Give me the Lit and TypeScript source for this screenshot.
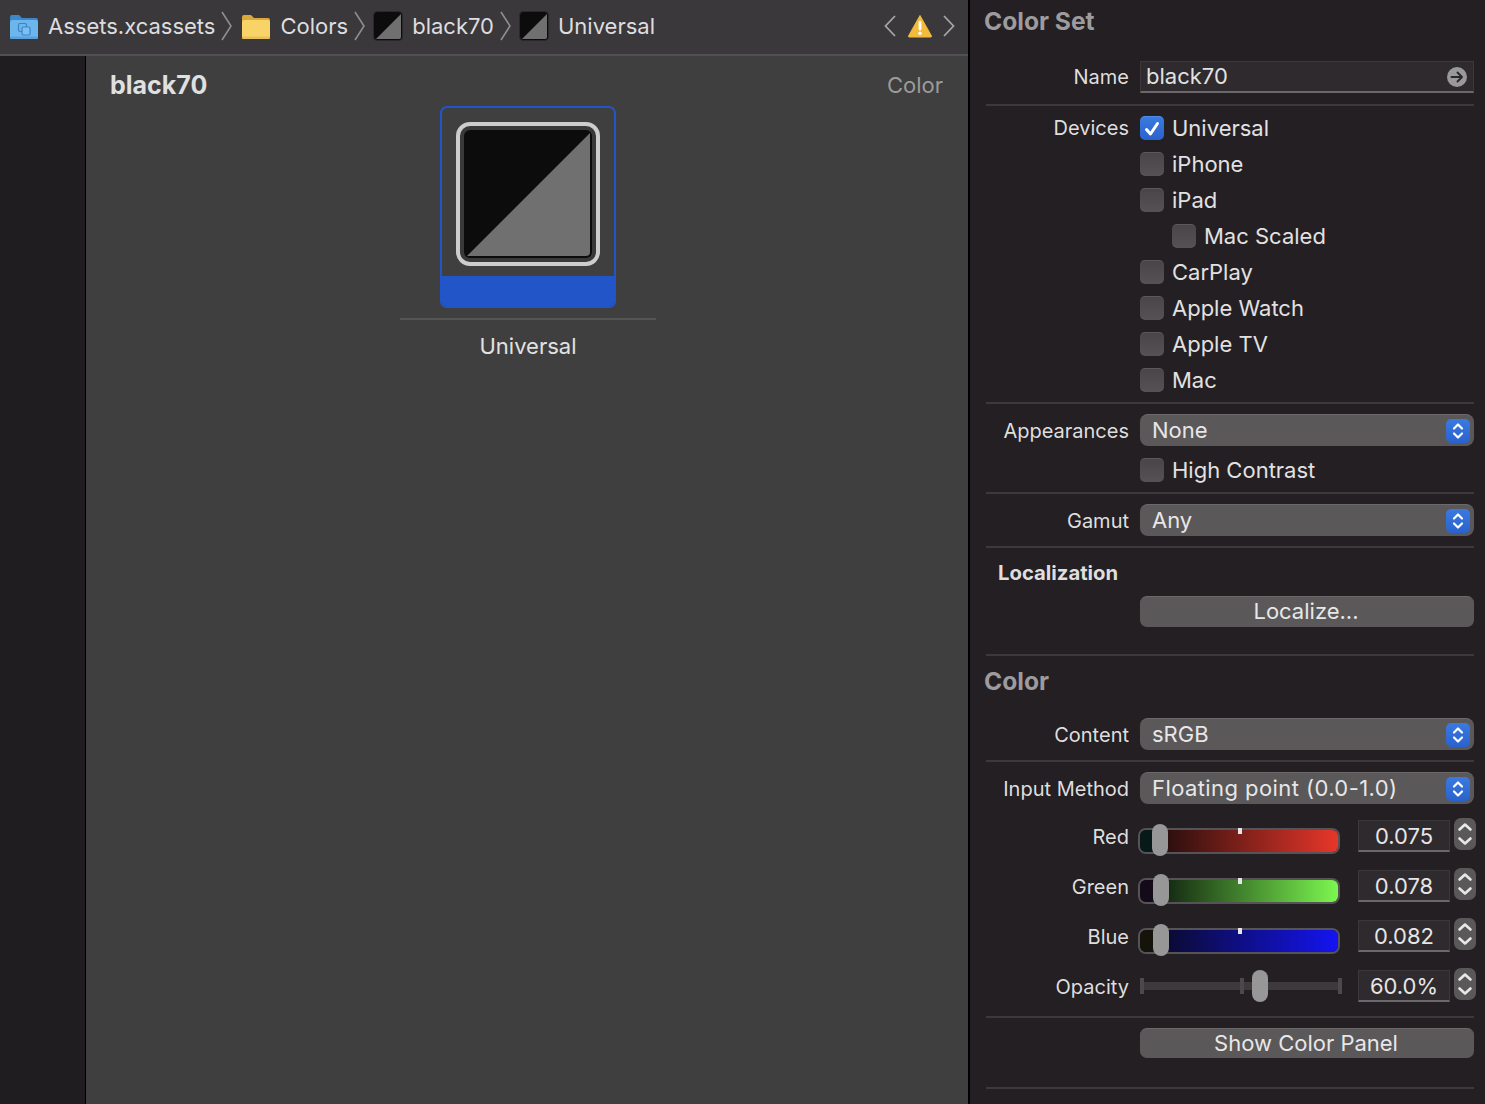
import { LitElement, html, css, svg } from "lit";
import { customElement } from "lit/decorators.js";

const stepperGlyph = html`<svg width="24" height="24" viewBox="0 0 24 24" fill="none" stroke="#fff" stroke-width="2.2" stroke-linecap="round" stroke-linejoin="round"><path d="M8 9.5 12 5.5 16 9.5"/><path d="M8 14.5 12 18.5 16 14.5"/></svg>`;

const swatch = html`<svg class="swatch" width="30" height="30" viewBox="0 0 30 30"><rect x="0.5" y="0.5" width="29" height="29" rx="4" fill="#0c0c0c" stroke="#2a2a2a"/><path d="M28 3 V26 a2 2 0 0 1 -2 2 H3 Z" fill="#707070"/></svg>`;

const crumbChevron = html`<svg class="crumb-chev" width="11" height="30" viewBox="0 0 11 30" fill="none" stroke="#8e8d8f" stroke-width="1.6"><path d="M1 1 10 15 1 29"/></svg>`;

function folder(back: string, front: string, band: string, glyph: boolean) {
  return html`<svg class="folder" width="28" height="28" viewBox="0 0 28 28">
    <path d="M0 5 a2 2 0 0 1 2-2 h7 l3 3 h14 a2 2 0 0 1 2 2 v4 H0Z" fill="${back}"/>
    <rect x="0" y="8" width="28" height="19" rx="2.2" fill="${front}"/>
    <rect x="0" y="24.5" width="28" height="2.5" rx="1.2" fill="${band}"/>
    ${glyph
      ? svg`<g fill="none" stroke="#3f82c4" stroke-width="1.2"><rect x="8.5" y="11.5" width="8" height="8" rx="1.5"/><rect x="12" y="15" width="8" height="8" rx="1.5" fill="#7cc0f2"/></g>`
      : null}
  </svg>`;
}

@customElement("app-root")
export class AppRoot extends LitElement {
  static styles = css`
    :host { display: block; width: 1485px; height: 1104px; overflow: hidden; font-family: Inter, "Liberation Sans", sans-serif; color: #e2e1e2; background: #000; }
    * { box-sizing: border-box; }
    .app { display: flex; height: 1104px; }

    .main { width: 968px; display: flex; flex-direction: column; flex: none; }
    .bar { height: 56px; flex: none; background: #3a383b; border-bottom: 2px solid #525152; display: flex; align-items: center; padding: 0 13px 2px 10px; font-size: 22px; color: #dedddf; }
    .bar .folder { margin-right: 10px; }
    .crumb-chev { margin: 0 10px 0 6px; flex: none; }
    .bar .swatch { margin: 0 9px 0 -2px; flex: none; }
    .spacer { flex: 1; }
    .nav { flex: none; }
    .warn { margin: 0 11px 0 12px; flex: none; }

    .body { flex: 1; display: flex; min-height: 0; }
    .sidebar { width: 86px; flex: none; background: #201d20; border-right: 1px solid #000; }
    .canvas { flex: 1; background: #3f3f3f; display: flex; flex-direction: column; }
    .canvas-head { height: 50px; flex: none; display: flex; align-items: center; justify-content: space-between; padding: 8px 25px 0 24px; }
    .canvas-title { font-size: 25px; font-weight: 700; color: #e0e0e0; }
    .canvas-kind { font-size: 22px; color: #9b9b9b; }
    .slot { align-self: center; width: 256px; display: flex; flex-direction: column; align-items: center; margin-left: 2px; }
    .tile { width: 176px; height: 202px; border: 2px solid #2255c8; border-radius: 7px; display: flex; flex-direction: column; align-items: center; overflow: hidden; }
    .well { width: 144px; height: 144px; margin-top: 14px; border: 4px solid #cdcdcd; border-radius: 14px; background: #393939; padding: 4px; flex: none; }
    .well svg { display: block; }
    .band { margin-top: auto; height: 30px; width: 100%; background: #2255c8; }
    .slot-rule { width: 256px; height: 2px; background: #555; margin-top: 10px; }
    .slot-name { font-size: 22px; color: #e2e2e2; margin-top: 12px; line-height: 28px; }

    .inspector { width: 515px; margin-left: 2px; flex: none; background: #231f23; padding: 0 11px 0 0; display: flex; flex-direction: column; }
    .section-title { font-size: 24.6px; font-weight: 700; color: #9d9b9d; padding-left: 14px; line-height: 30px; }
    .rule { height: 2px; background: #3c393c; margin-left: 16px; flex: none; }
    .row { display: grid; grid-template-columns: 159px 334px; column-gap: 11px; align-items: center; }
    .label { font-size: 20px; text-align: right; color: #dfdedf; line-height: 24px; padding-top: 2px; }
    .control { min-width: 0; }
    .top { align-items: start; }
    .top .label { padding-top: 0; margin-top: 6px; }
    .name-row .label { padding-top: 0; }

    .field { height: 32px; background: #2e2a2e; border-top: 1px solid #3b383b; border-left: 1px solid #3b383b; border-right: 1px solid #3b383b; border-bottom: 2px solid #6a686a; font-size: 22px; padding-left: 5px; display: flex; align-items: center; justify-content: space-between; padding-right: 6px; color: #e2e1e2; }
    .field span { margin-top: -2px; }
    .go { width: 20px; height: 20px; flex: none; }

    .check-row { height: 36px; display: flex; align-items: center; gap: 8px; font-size: 22px; }
    .check-row.indent { padding-left: 32px; }
    .box { width: 24px; height: 24px; flex: none; border-radius: 5px; background: linear-gradient(#484648, #545254); border-top: 1px solid #5b595b; }
    .box.on { background: linear-gradient(#3a7ae0, #2a62cc); border-top: 1px solid #4f8ce8; display: flex; align-items: center; justify-content: center; }

    .popup { height: 32px; border-radius: 8px; background: #5a5859; border-top: 1px solid #6b696a; font-size: 22px; display: flex; align-items: center; justify-content: space-between; padding: 0 4px 0 12px; color: #e8e7e8; }
    .popup span { margin-top: -2px; }
    .popup span.wide { letter-spacing: 0.42px; }
    .popup-btn { width: 24px; height: 24px; border-radius: 5px; background: linear-gradient(#3a7ae0, #2a62cc); flex: none; }
    .popup-btn svg { display: block; }

    .push { height: 31px; border-radius: 7px; background: #5a5859; border-top: 1px solid #6b696a; font-size: 22px; display: flex; align-items: center; justify-content: center; color: #e8e7e8; padding: 0 2px 3px 0; }
    .push.short { height: 30px; padding-bottom: 1px; }

    .heading { font-size: 20.3px; font-weight: 700; padding-left: 28px; color: #dfdedf; line-height: 34px; height: 34px; }

    .slider-row { height: 50px; display: grid; grid-template-columns: 159px 229px 92px 26px; align-items: center; }
    .track-wrap { position: relative; width: 202px; height: 50px; margin-left: 9px; }
    .track { position: absolute; left: 0; top: 17px; width: 202px; height: 26px; border-radius: 8px; border: 2px solid #555356; overflow: hidden; display: flex; }
    .track-start { flex: none; }
    .track-fill { flex: 1; }
    .tick { position: absolute; left: 100px; top: 17px; width: 4px; height: 6px; background: #e6e6e6; }
    .thumb { position: absolute; top: 13px; width: 16px; height: 32px; border-radius: 8px; background: #989798; }
    .op-line { position: absolute; left: 4px; top: 21px; width: 198px; height: 8px; background: #3c3a3c; }
    .op-tick { position: absolute; top: 17px; width: 4px; height: 16px; background: #4b494b; }
    .op-thumb { top: 9px; }
    .value { width: 92px; height: 32px; background: #2e2a2e; border-top: 1px solid #3b383b; border-left: 1px solid #3b383b; border-right: 1px solid #3b383b; border-bottom: 2px solid #6a686a; font-size: 22px; display: flex; align-items: center; justify-content: center; color: #e6e5e6; }
    .stepper { width: 22px; height: 32px; margin: 0 0 4px 4px; border-radius: 7px; background: #5a5859; }
    .stepper svg { display: block; }
  `;

  private popup(text: string, wide = false) {
    return html`<div class="popup"><span class="${wide ? "wide" : ""}">${text}</span><div class="popup-btn">${stepperGlyph}</div></div>`;
  }

  private check(text: string, on = false, indent = false) {
    return html`<div class="check-row ${indent ? "indent" : ""}">
      <div class="box ${on ? "on" : ""}">${on
        ? html`<svg width="18" height="18" viewBox="0 0 18 18" fill="none" stroke="#fff" stroke-width="3" stroke-linecap="round" stroke-linejoin="round"><path d="M3.5 9.5 7.5 14 14.5 3.5"/></svg>`
        : null}</div><span>${text}</span></div>`;
  }

  private stepper() {
    return html`<div class="stepper"><svg width="22" height="32" viewBox="0 0 22 32" fill="none" stroke="#e8e8e8" stroke-width="2.6" stroke-linecap="round" stroke-linejoin="round"><path d="M5.5 11.5 11 6.5 16.5 11.5"/><path d="M5.5 20.5 11 25.5 16.5 20.5"/></svg></div>`;
  }

  private colorSlider(label: string, value: string, thumb: number, start: string, from: string, to: string) {
    return html`<div class="slider-row">
      <div class="label">${label}</div>
      <div class="track-wrap">
        <div class="track">
          <div class="track-start" style="width:${thumb}px;background:${start}"></div>
          <div class="track-fill" style="background:linear-gradient(90deg,${from},${to})"></div>
        </div>
        <div class="tick"></div>
        <div class="thumb" style="left:${thumb}px"></div>
      </div>
      <div class="value">${value}</div>
      ${this.stepper()}
    </div>`;
  }

  render() {
    return html`<div class="app">
      <div class="main">
        <div class="bar">
          ${folder("#3f86c8", "#6cb6ee", "#5aa2dc", true)}<span>Assets.xcassets</span>${crumbChevron}
          ${folder("#d9a93a", "#f8d468", "#e8c054", false)}<span>Colors</span>${crumbChevron}
          ${swatch}<span>black70</span>${crumbChevron}
          ${swatch}<span>Universal</span>
          <div class="spacer"></div>
          <svg class="nav" width="12" height="24" viewBox="0 0 12 24" fill="none" stroke="#a5a4a6" stroke-width="1.8"><path d="M11 2 1.5 12 11 22"/></svg>
          <svg class="warn" width="24" height="24" viewBox="0 0 24 24"><path d="M12 1.5 L23.5 22 a0.8 0.8 0 0 1 -0.6 1 H1.1 a0.8 0.8 0 0 1 -0.6 -1 Z" fill="#f2bb3c" stroke="#f2bb3c" stroke-linejoin="round"/><rect x="10.6" y="7" width="2.8" height="9.5" rx="1.4" fill="#fff"/><circle cx="12" cy="19.3" r="1.7" fill="#fff"/></svg>
          <svg class="nav" width="12" height="24" viewBox="0 0 12 24" fill="none" stroke="#a5a4a6" stroke-width="1.8"><path d="M1 2 10.5 12 1 22"/></svg>
        </div>
        <div class="body">
          <div class="sidebar"></div>
          <div class="canvas">
            <div class="canvas-head"><span class="canvas-title">black70</span><span class="canvas-kind">Color</span></div>
            <div class="slot">
              <div class="tile">
                <div class="well">
                  <svg width="128" height="128" viewBox="0 0 128 128"><rect width="128" height="128" rx="6" fill="#0c0c0c"/><path d="M126 3 V122 a4 4 0 0 1 -4 4 H3 Z" fill="#707070"/></svg>
                </div>
                <div class="band"></div>
              </div>
              <div class="slot-rule"></div>
              <div class="slot-name">Universal</div>
            </div>
          </div>
        </div>
      </div>

      <div class="inspector">
        <div class="section-title" style="margin-top:6px">Color Set</div>
        <div class="row name-row" style="margin-top:25px">
          <div class="label">Name</div>
          <div class="control"><div class="field"><span>black70</span>
            <svg class="go" viewBox="0 0 20 20"><circle cx="10" cy="10" r="10" fill="#9a999a"/><path d="M4.5 10 H15 M10.5 5.5 15 10 10.5 14.5" fill="none" stroke="#2b282b" stroke-width="2" stroke-linecap="round" stroke-linejoin="round"/></svg>
          </div></div>
        </div>
        <div class="rule" style="margin-top:11px"></div>
        <div class="row top" style="margin-top:4px">
          <div class="label">Devices</div>
          <div class="control">
            ${this.check("Universal", true)}
            ${this.check("iPhone")}
            ${this.check("iPad")}
            ${this.check("Mac Scaled", false, true)}
            ${this.check("CarPlay")}
            ${this.check("Apple Watch")}
            ${this.check("Apple TV")}
            ${this.check("Mac")}
          </div>
        </div>
        <div class="rule" style="margin-top:4px"></div>
        <div class="row" style="margin-top:10px">
          <div class="label">Appearances</div>
          <div class="control">${this.popup("None")}</div>
        </div>
        <div class="row" style="margin-top:6px">
          <div></div>
          <div class="control">${this.check("High Contrast")}</div>
        </div>
        <div class="rule" style="margin-top:4px"></div>
        <div class="row" style="margin-top:10px">
          <div class="label">Gamut</div>
          <div class="control">${this.popup("Any")}</div>
        </div>
        <div class="rule" style="margin-top:10px"></div>
        <div class="heading" style="margin-top:8px">Localization</div>
        <div class="row" style="margin-top:6px">
          <div></div>
          <div class="control"><div class="push">Localize...</div></div>
        </div>
        <div class="rule" style="margin-top:27px"></div>
        <div class="section-title" style="margin-top:10px">Color</div>
        <div class="row" style="margin-top:22px">
          <div class="label">Content</div>
          <div class="control">${this.popup("sRGB")}</div>
        </div>
        <div class="rule" style="margin-top:10px"></div>
        <div class="row" style="margin-top:10px">
          <div class="label">Input Method</div>
          <div class="control">${this.popup("Floating point (0.0-1.0)", true)}</div>
        </div>
        <div style="height:7px"></div>
        ${this.colorSlider("Red", "0.075", 14, "#071918", "#1e0c0c", "#e8362a")}
        ${this.colorSlider("Green", "0.078", 15, "#150a1a", "#0e1c0e", "#7cf750")}
        ${this.colorSlider("Blue", "0.082", 15, "#14140a", "#0a0a26", "#1414f2")}
        <div class="slider-row">
          <div class="label">Opacity</div>
          <div class="track-wrap">
            <div class="op-line"></div>
            <div class="op-tick" style="left:2px"></div>
            <div class="op-tick" style="left:102px"></div>
            <div class="op-tick" style="left:200px"></div>
            <div class="thumb op-thumb" style="left:114px"></div>
          </div>
          <div class="value">60.0%</div>
          ${this.stepper()}
        </div>
        <div class="rule" style="margin-top:5px"></div>
        <div class="row" style="margin-top:10px">
          <div></div>
          <div class="control"><div class="push short">Show Color Panel</div></div>
        </div>
        <div class="rule" style="margin-top:29px"></div>
      </div>
    </div>`;
  }
}
